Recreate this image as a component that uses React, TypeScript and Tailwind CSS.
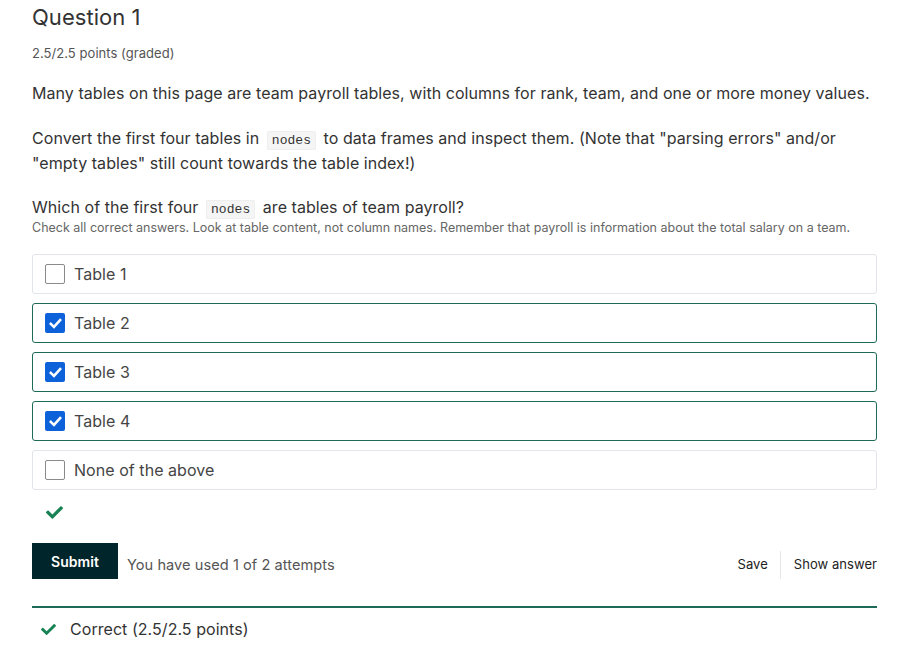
import React from "react";

const Check = ({ className }: { className?: string }) => (
  <svg viewBox="0 0 512 512" className={className} fill="currentColor">
    <path d="M173.9 439.4 7.5 273c-10-10-10-26.2 0-36.2l36.2-36.2c10-10 26.2-10 36.2 0L192 312.7 432.1 72.6c10-10 26.2-10 36.2 0l36.2 36.2c10 10 10 26.2 0 36.2L210.1 439.4c-10 10-26.2 10-36.2 0z" />
  </svg>
);

const Box = ({ checked }: { checked: boolean }) =>
  checked ? (
    <span className="flex h-[20px] w-[20px] items-center justify-center rounded-[2px] bg-[#0d62d9] text-white">
      <svg viewBox="0 0 20 20" className="h-[17px] w-[17px]" fill="none" stroke="currentColor" strokeWidth="3" strokeLinecap="square" strokeLinejoin="miter">
        <path d="M4.5 10.5 8.2 14 15.5 6" />
      </svg>
    </span>
  ) : (
    <span className="h-[20px] w-[20px] rounded-[2px] border border-[#8a8a8a] bg-white" />
  );

const options = [
  { label: "Table 1", checked: false },
  { label: "Table 2", checked: true },
  { label: "Table 3", checked: true },
  { label: "Table 4", checked: true },
  { label: "None of the above", checked: false },
];

const Code = ({ children }: { children: React.ReactNode }) => (
  <code className="mx-[3px] rounded-[2px] border border-[#eeeeee] bg-[#f5f5f5] px-[4px] py-[1px] text-[13px] text-[#333]" style={{ fontFamily: '"Liberation Mono", monospace' }}>
    {children}
  </code>
);

export default function App() {
  return (
    <div className="min-h-[652px] bg-white pl-[32px] pr-[37px] text-[#454545] tracking-[0.05px]" style={{ fontFamily: 'Inter, "Noto Sans", sans-serif' }}>
      <h1 className="pt-[3px] text-[22px] leading-[28px] text-[#333]">Question 1</h1>
      <div className="mt-[13px] text-[13px] leading-[18px] text-[#555]">2.5/2.5 points (graded)</div>
      <p className="mt-[20px] text-[16px] leading-[23px] text-[#333]">
        Many tables on this page are team payroll tables, with columns for rank, team, and one or more money values.
      </p>
      <p className="mt-[22px] text-[16px] leading-[23px] text-[#333]">
        Convert the first four tables in <Code>nodes</Code> to data frames and inspect them. (Note that "parsing errors" and/or
        <br />
        "empty tables" still count towards the table index!)
      </p>
      <p className="mt-[21px] text-[16px] leading-[23px] text-[#333]">
        Which of the first four <Code>nodes</Code> are tables of team payroll?
      </p>
      <div className="text-[12.5px] leading-[14px] text-[#666] tracking-normal">
        Check all correct answers. Look at table content, not column names. Remember that payroll is information about the total salary on a team.
      </div>
      <div className="mt-[19px] flex flex-col gap-[9px]">
        {options.map((o) => (
          <div
            key={o.label}
            className={`flex h-[40px] items-center gap-[9px] rounded-[3px] border pl-[12px] ${
              o.checked ? "border-[#1d6b57]" : "border-[#e1e4e8]"
            }`}
          >
            <Box checked={o.checked} />
            <span className="text-[16px] text-[#454545]">{o.label}</span>
          </div>
        ))}
      </div>
      <div className="mt-[14px] pl-[14px] text-[#178253]">
        <Check className="h-[17px] w-[17px]" />
      </div>
      <div className="mt-[22px] flex items-center">
        <button className="h-[36px] bg-[#00262b] px-[19px] text-[14px] font-semibold text-white">Submit</button>
        <span className="ml-[9px] mt-[10px] text-[14.6px] text-[#555]">You have used 1 of 2 attempts</span>
        <div className="ml-auto mt-[8px] flex items-center text-[13px] text-[#222]">
          <span className="pr-[12px]">Save</span>
          <span className="h-[28px] w-px bg-[#e4e6ea]" />
          <span className="pl-[13px]">Show answer</span>
        </div>
      </div>
      <div className="mt-[27px] h-[2px] bg-[#1d6b57]" />
      <div className="mt-[9px] flex items-center pl-[9px]">
        <Check className="h-[15px] w-[15px] text-[#178253]" />
        <span className="ml-[14px] text-[16px] text-[#333]">Correct (2.5/2.5 points)</span>
      </div>
    </div>
  );
}
